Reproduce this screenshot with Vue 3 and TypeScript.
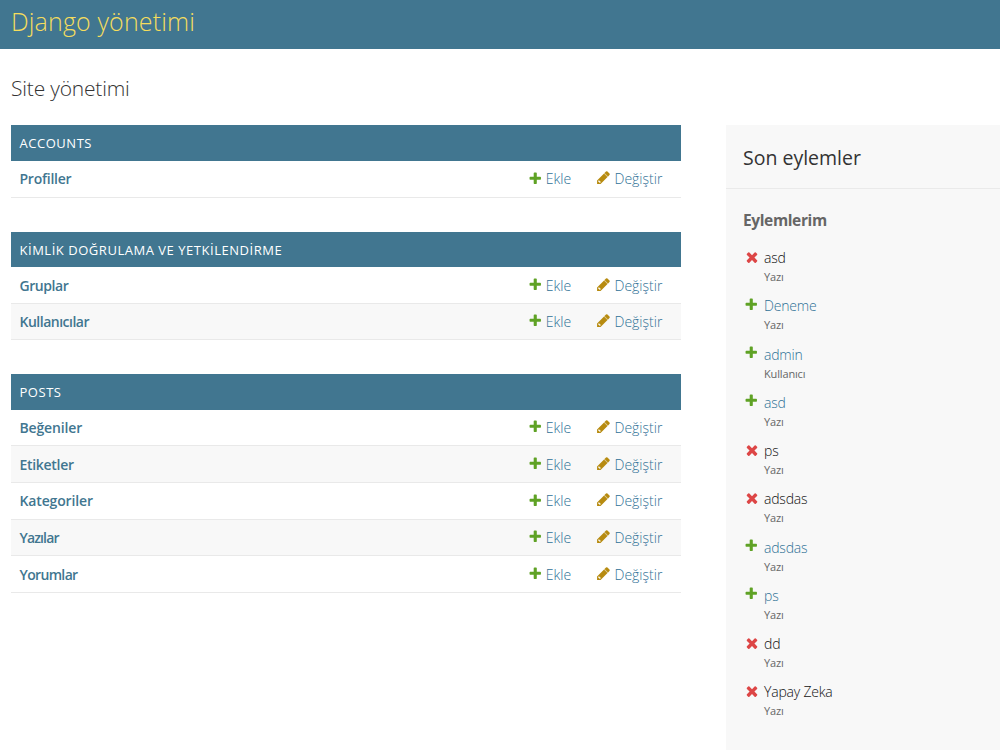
<script setup lang="ts">
interface Model {
  label: string
  tracking: number
}
interface AdminModule {
  name: string
  models: Model[]
}
interface Action {
  kind: 'add' | 'delete'
  title: string
  type: string
}

const modules: AdminModule[] = [
  { name: 'ACCOUNTS', models: [{ label: 'Profiller', tracking: -0.25 }] },
  {
    name: 'KİMLİK DOĞRULAMA VE YETKİLENDİRME',
    models: [
      { label: 'Gruplar', tracking: -0.45 },
      { label: 'Kullanıcılar', tracking: -0.5 },
    ],
  },
  {
    name: 'POSTS',
    models: [
      { label: 'Beğeniler', tracking: -0.15 },
      { label: 'Etiketler', tracking: -0.3 },
      { label: 'Kategoriler', tracking: -0.15 },
      { label: 'Yazılar', tracking: -0.85 },
      { label: 'Yorumlar', tracking: -0.65 },
    ],
  },
]

const actions: Action[] = [
  { kind: 'delete', title: 'asd', type: 'Yazı' },
  { kind: 'add', title: 'Deneme', type: 'Yazı' },
  { kind: 'add', title: 'admin', type: 'Kullanıcı' },
  { kind: 'add', title: 'asd', type: 'Yazı' },
  { kind: 'delete', title: 'ps', type: 'Yazı' },
  { kind: 'delete', title: 'adsdas', type: 'Yazı' },
  { kind: 'add', title: 'adsdas', type: 'Yazı' },
  { kind: 'add', title: 'ps', type: 'Yazı' },
  { kind: 'delete', title: 'dd', type: 'Yazı' },
  { kind: 'delete', title: 'Yapay Zeka', type: 'Yazı' },
]

const plusPath =
  'M1600 796v192q0 40-28 68t-68 28h-416v416q0 40-28 68t-68 28h-192q-40 0-68-28t-28-68v-416h-416q-40 0-68-28t-28-68v-192q0-40 28-68t68-28h416v-416q0-40 28-68t68-28h192q40 0 68 28t28 68v416h416q40 0 68 28t28 68z'
const crossPath =
  'M1490 1322q0 40-28 68l-136 136q-28 28-68 28t-68-28l-294-294-294 294q-28 28-68 28t-68-28l-136-136q-28-28-28-68t28-68l294-294-294-294q-28-28-28-68t28-68l136-136q28-28 68-28t68 28l294 294 294-294q28-28 68-28t68 28l136 136q28 28 28 68t-28 68l-294 294 294 294q28 28 28 68z'
const pencilPath =
  'M491 1536l91-91-235-235-91 91v107h128v128h107zM960 416l416 416-832 832h-416v-416zm683 96q0 53-37 90l-166 166-416-416 166-165q36-38 90-38 53 0 91 38l235 234q37 39 37 91z'
const pencilTransform = 'translate(-60 60)'
</script>

<template>
  <div class="page">
    <header class="header"><h1>Django yönetimi</h1></header>
    <h2 class="title">Site yönetimi</h2>
    <div class="content">
      <main class="main">
        <section v-for="m in modules" :key="m.name" class="module">
          <div class="caption"><span>{{ m.name }}</span></div>
          <div v-for="model in m.models" :key="model.label" class="row">
            <a class="model" :style="{ letterSpacing: model.tracking + 'px' }">{{ model.label }}</a>
            <a class="link add">
              <svg class="icon" viewBox="0 0 1792 1792"><path fill="#5fa225" :d="plusPath" /></svg>
              <span>Ekle</span>
            </a>
            <a class="link change">
              <svg class="icon pencil" viewBox="0 0 1792 1792">
                <g fill="#b78b10">
                  <path fill-rule="evenodd" :d="pencilPath" />
                  <path d="M1040 336l416 416 64-64-416-416z" :transform="pencilTransform" fill-opacity="0.7" />
                </g>
              </svg>
              <span>Değiştir</span>
            </a>
          </div>
        </section>
      </main>
      <aside class="sidebar">
        <h2>Son eylemler</h2>
        <h3>Eylemlerim</h3>
        <ul>
          <li v-for="(a, i) in actions" :key="i" :class="a.kind">
            <svg class="icon" viewBox="0 0 1792 1792">
              <path v-if="a.kind === 'add'" fill="#5fa225" :d="plusPath" />
              <path v-else fill="#dd4646" :d="crossPath" />
            </svg>
            <div>
              <div class="name">{{ a.title }}</div>
              <div class="type">{{ a.type }}</div>
            </div>
          </li>
        </ul>
      </aside>
    </div>
  </div>
</template>

<style>
body {
  margin: 0;
  background: #fff;
}
</style>

<style scoped>
.page {
  width: 1000px;
  height: 750px;
  overflow: hidden;
  display: flex;
  flex-direction: column;
  font-family: 'Open Sans', 'Noto Sans', sans-serif;
  font-size: 14px;
  color: #333;
}
h1,
h2,
h3,
ul {
  margin: 0;
  padding: 0;
  font-weight: 400;
  list-style: none;
}
.header {
  flex: none;
  height: 49px;
  box-sizing: border-box;
  padding: 3px 11px 0;
  background: #417690;
}
.header h1 {
  font-size: 25px;
  line-height: 37px;
  font-weight: 300;
  letter-spacing: 0.15px;
  color: #f5dd5d;
}
.title {
  flex: none;
  height: 76px;
  box-sizing: border-box;
  padding: 24px 11px 0;
  font-size: 21px;
  line-height: 30px;
  font-weight: 300;
  letter-spacing: -0.2px;
}
.content {
  flex: 1;
  display: flex;
  justify-content: space-between;
  padding-left: 11px;
}
.main {
  width: 670px;
  padding-top: 0.45px;
}
.module {
  margin-bottom: 33.8px;
}
.caption {
  height: 35.7px;
  line-height: 36px;
  padding-left: 8.5px;
  background: #417690;
  color: #fff;
  font-size: 13px;
  letter-spacing: 0.53px;
}
.row {
  display: flex;
  align-items: center;
  height: 36.6px;
  box-sizing: border-box;
  padding: 0 18px 0 8.5px;
  border-bottom: 1px solid #e9e9e9;
}
.row:nth-child(odd) {
  background: #f8f8f8;
}
.model {
  flex: 1;
  font-weight: 600;
  color: #417690;
}
.link {
  display: flex;
  align-items: center;
  font-weight: 300;
  color: #2f7196;
}
.link.add {
  width: 68px;
}
.link.change {
  width: 66.5px;
}
.icon {
  flex: none;
  width: 14.5px;
  height: 14.5px;
}
.link .icon {
  margin: -2px 3.3px 0 -0.5px;
}
.link .pencil {
  width: 15px;
  height: 15px;
  margin-right: 3.5px;
}
.sidebar {
  width: 274px;
  background: #f8f8f8;
}
.sidebar h2 {
  height: 64px;
  box-sizing: border-box;
  padding: 18px 17px 0;
  border-bottom: 1px solid #eaeaea;
  font-size: 19.5px;
  line-height: 30px;
}
.sidebar h3 {
  padding: 19.5px 17px 0;
  height: 58px;
  box-sizing: border-box;
  font-size: 15.5px;
  line-height: 22px;
  font-weight: 700;
  letter-spacing: -0.37px;
  color: #666;
}
.sidebar li {
  display: flex;
  height: 48.25px;
  padding-left: 17.5px;
}
.sidebar li .icon {
  margin: 1.5px 6px 0 0;
}
.sidebar li.delete .icon {
  width: 16px;
  height: 16px;
  margin: 1.5px 4.5px 0 0;
}
.name {
  font-size: 14px;
  line-height: 22px;
  font-weight: 300;
  letter-spacing: -0.2px;
  color: #111;
}
.add .name {
  color: #2f7196;
}
.type {
  font-size: 11px;
  line-height: 16px;
  letter-spacing: -0.15px;
  color: #666;
}
</style>
